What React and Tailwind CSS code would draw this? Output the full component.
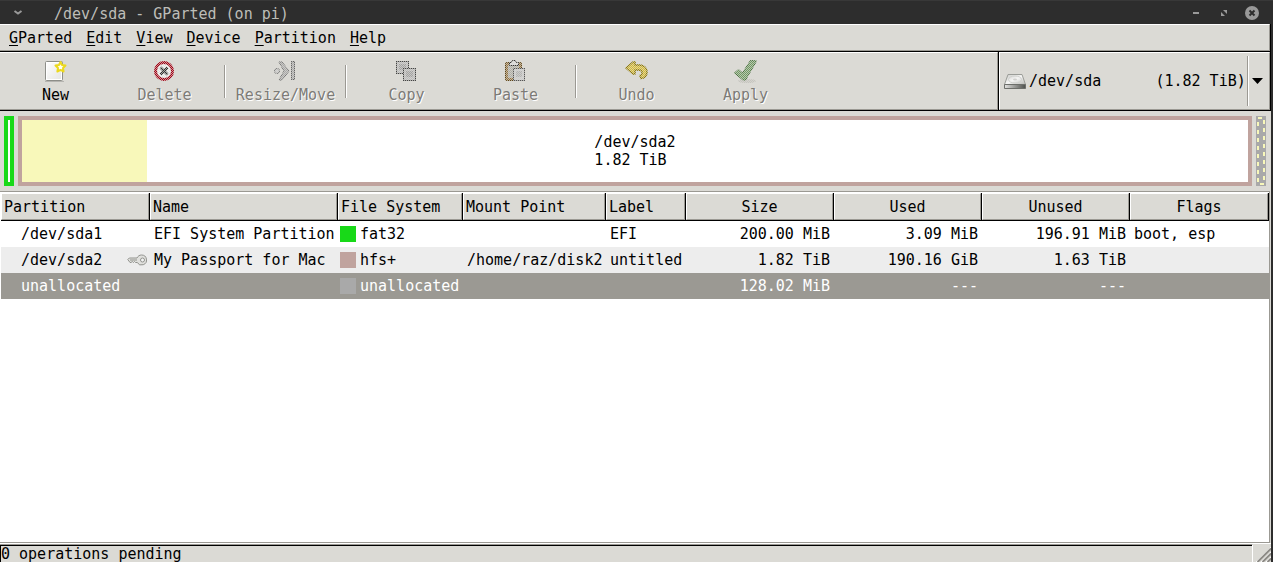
import React from "react";

function Dither({ id, children }) {
  return (
    <svg width="24" height="24" viewBox="1 1 24 24" aria-hidden="true">
      <defs>
        <pattern id={id + "-p"} width="2" height="2" patternUnits="userSpaceOnUse">
          <rect width="1" height="1" fill="#fff" />
          <rect x="1" y="1" width="1" height="1" fill="#fff" />
        </pattern>
        <mask id={id} maskUnits="userSpaceOnUse" x="0" y="0" width="26" height="26">
          <rect width="26" height="26" fill={"url(#" + id + "-p)"} shapeRendering="crispEdges" />
        </mask>
      </defs>
      <g opacity=".3">{children}</g>
      <g mask={"url(#" + id + ")"}>{children}</g>
    </svg>
  );
}

const NewIcon = () => (
  <svg width="24" height="24" viewBox="1 1 24 24" aria-hidden="true">
    <defs>
      <linearGradient id="paper" x1="0" y1="0" x2="1" y2="1">
        <stop offset="0" stopColor="#fff" />
        <stop offset="1" stopColor="#e4e4e2" />
      </linearGradient>
    </defs>
    <path d="M2 22.500H21" stroke="#b5b4b0" />
    <rect x="2.500" y="2.500" width="17" height="19" rx="1" fill="url(#paper)" stroke="#8d8e89" />
    <rect x="3.500" y="3.500" width="15" height="17" fill="none" stroke="#fff" />
    <path d="M17.500 3l1.500 3 3.500.5-2.500 2.500.6 3.500-3.100-1.600-3.100 1.600.6-3.500-2.500-2.500 3.500-.5z" fill="#fffef0" stroke="#ecd91e" strokeWidth="2" strokeLinejoin="round" />
  </svg>
);

const DeleteIcon = () => (
  <Dither id="delete">
    <circle cx="12" cy="12" r="8.500" fill="#f4f4f4" stroke="#a40014" strokeWidth="3" />
    <path d="M8.500 8.500l7 7M15.500 8.500l-7 7" stroke="#333" strokeWidth="2.500" />
  </Dither>
);

const ResizeIcon = () => (
  <Dither id="resize">
    <circle cx="4" cy="12" r="2.500" fill="#ccc" stroke="#777" />
    <path d="M6 3h3l7 9-7 9H6l5-9z" fill="#aaa" stroke="#777" />
    <rect x="18.500" y="2.500" width="3" height="18" fill="#aaa" stroke="#666" />
  </Dither>
);

const CopyIcon = () => (
  <Dither id="copy">
    <rect x="2.500" y="2.500" width="12" height="12" fill="#bbb" stroke="#444" />
    <path d="M5 6h7M5 8h7M5 10h7" stroke="#888" />
    <rect x="9.500" y="9.500" width="12" height="12" fill="#bbb" stroke="#444" />
    <path d="M12 13h7M12 15h7M12 17h7" stroke="#888" />
  </Dither>
);

const PasteIcon = () => (
  <Dither id="paste">
    <rect x="2.500" y="3.500" width="16" height="18" rx="1" fill="#93723f" stroke="#5f4516" />
    <rect x="5" y="6" width="11" height="13" fill="#b0aea6" />
    <path d="M6.500 6.500v-3h2l1-2h3l1 2h2v3z" fill="#ddd" stroke="#333" />
    <rect x="10.500" y="9.500" width="11" height="12" fill="#ccc" stroke="#555" />
    <path d="M13 13h6M13 15h6M13 17h6" stroke="#999" />
  </Dither>
);

const UndoIcon = () => (
  <Dither id="undo">
    <path d="M2 9l7-6h2v3h4c5 0 8 3 8 7s-3 6.500-6 6.500l-1-3c3-1 3-5-1-5.500h-4v4H9z" fill="#d9bd30" stroke="#8f7a08" strokeWidth="1.500" strokeLinejoin="round" />
  </Dither>
);

const ApplyIcon = () => (
  <Dither id="apply">
    <ellipse cx="14" cy="22" rx="9" ry="2" fill="#c6c5bf" />
    <path d="M1.500 14l4-3.500 4 3.500 8-12.500 6 .5-11 19H10z" fill="#6f9a62" stroke="#47703d" strokeLinejoin="round" />
  </Dither>
);

const DiskIcon = () => (
  <svg className="pointer-events-none absolute left-[3px] top-[17px]" width="24" height="24" viewBox="0 0 24 24" aria-hidden="true">
    <defs>
      <linearGradient id="disk" x1="0" y1="0" x2="1" y2="1">
        <stop offset="0" stopColor="#c9cac7" />
        <stop offset=".5" stopColor="#f5f5f4" />
        <stop offset="1" stopColor="#b9bab6" />
      </linearGradient>
      <linearGradient id="diskFront" x1="0" y1="0" x2="1" y2="0">
        <stop offset="0" stopColor="#e2e2e0" />
        <stop offset="1" stopColor="#4e504c" />
      </linearGradient>
    </defs>
    <path d="M5 4.500h14l3.500 10h-21z" fill="url(#disk)" stroke="#9b9d98" strokeLinejoin="round" />
    <ellipse cx="12" cy="9.500" rx="6.500" ry="3.500" fill="none" stroke="#cfd0cd" />
    <ellipse cx="12" cy="9.500" rx="2" ry="1" fill="#d0d0cd" />
    <path d="M1.500 14.500h21v4H1.500z" fill="url(#diskFront)" stroke="#6d6f6b" strokeLinejoin="round" />
  </svg>
);

const KeyIcon = () => (
  <svg width="20" height="14" viewBox="0 0 20 14" aria-hidden="true">
    <path d="M.8 6.500l1.500-1.500H10C11 3 12.500 2 14.500 2a5 5 0 1 1-4.300 7.500H8.500L7.500 8.500l-1 1-1.200-1-1.300 1H3z" fill="#e0e0dd" stroke="#92938e" />
    <circle cx="15.500" cy="7" r="2" fill="#f4f4f4" stroke="#92938e" />
    <path d="M3 7h7" stroke="#92938e" />
  </svg>
);

const Separator = () => (
  <div className="flex w-[12px] shrink-0 justify-center pb-[11px] pt-[12px]">
    <div className="w-[2px] border-l border-r border-l-[#9b9993] border-r-white" />
  </div>
);

function Tool({ label, icon, disabled }) {
  return (
    <button
      disabled={disabled}
      className={
        "flex w-[109px] shrink-0 flex-col items-center pt-[7px] " +
        (disabled ? "text-[#7d7b77] [text-shadow:1px_1px_0_#fff]" : "text-black")
      }
    >
      {icon}
      <span className="leading-[22px]">{label}</span>
    </button>
  );
}

const menus = ["GParted", "Edit", "View", "Device", "Partition", "Help"];

const columns = [
  ["Partition", "w-[149px] text-left"],
  ["Name", "w-[188px] text-left"],
  ["File System", "w-[125px] text-left"],
  ["Mount Point", "w-[143px] text-left"],
  ["Label", "w-[80px] text-left"],
  ["Size", "w-[148px] text-center"],
  ["Used", "w-[148px] text-center"],
  ["Unused", "w-[148px] text-center"],
  ["Flags", "text-center"],
];

const rows = [
  { part: "/dev/sda1", name: "EFI System Partition", fs: "fat32", swatch: "bg-[#18d918]", mount: "", label: "EFI", size: "200.00 MiB", used: "3.09 MiB", unused: "196.91 MiB", flags: "boot, esp", style: "bg-white text-black" },
  { part: "/dev/sda2", locked: true, name: "My Passport for Mac", fs: "hfs+", swatch: "bg-[#c0a39e]", mount: "/home/raz/disk2", label: "untitled", size: "1.82 TiB", used: "190.16 GiB", unused: "1.63 TiB", flags: "", style: "bg-[#ededed] text-black" },
  { part: "unallocated", name: "", fs: "unallocated", swatch: "bg-[#a9a9a9]", mount: "", label: "", size: "128.02 MiB", used: "---", unused: "---", flags: "", style: "bg-[#9b9993] text-white" },
];

const leftDashes = [6, 14, 22, 30, 38, 46, 54, 62];
const rightDashes = [4, 12, 20, 28, 36, 44, 52, 60];

export default function App() {
  return (
    <div className="flex h-screen flex-col overflow-hidden bg-[#2d2d2d] font-['DejaVu_Sans_Mono',monospace] text-[15px] leading-[18px] text-black">
      <header className="flex h-[24px] shrink-0 items-center border-t border-[#383838] pl-[13px] pr-[7px] pt-[1px] text-[#bdbdb8]">
        <button aria-label="Window menu" className="w-[41px]">
          <svg width="10" height="6" viewBox="0 0 10 6"><path d="M1.500 1l3.500 2.500L8.500 1" fill="none" stroke="#999" strokeWidth="2" /></svg>
        </button>
        <h1 className="flex-1 pt-[2px]">/dev/sda - GParted (on pi)</h1>
        <button aria-label="Minimize" className="flex w-[28px] justify-center">
          <svg width="8" height="14" viewBox="0 0 8 14"><path d="M1 7h6" stroke="#999" strokeWidth="2" /></svg>
        </button>
        <button aria-label="Restore" className="flex w-[28px] justify-center">
          <svg width="8" height="14" viewBox="0 0 8 14"><path d="M3 4h4v4zM1 6v4h4z" fill="#999" /></svg>
        </button>
        <button aria-label="Close" className="flex w-[28px] justify-center">
          <svg width="14" height="14" viewBox="0 0 14 14"><circle cx="7" cy="7" r="7" fill="#999" /><path d="M4.500 4.500l5 5M9.500 4.500l-5 5" stroke="#2d2d2d" strokeWidth="2" /></svg>
        </button>
      </header>

      <div className="mr-[2px] flex min-h-0 flex-1 flex-col bg-[#dbdad5]">
        <nav className="h-[28px] shrink-0 border-b border-r border-black">
          <div className="flex h-full items-center border-b border-r border-t border-b-[#9b9993] border-r-[#9b9993] border-t-white pl-[2px]">
            {menus.map((m) => (
              <button key={m} className="px-[7px]">
                <span className="underline decoration-1 underline-offset-2">{m[0]}</span>{m.slice(1)}
              </button>
            ))}
          </div>
        </nav>

        <div className="flex h-[59px] shrink-0">
          <div className="min-w-0 flex-1 border-b border-r border-black">
            <div className="flex h-full overflow-hidden border-b border-r border-t border-b-[#9b9993] border-r-[#9b9993] border-t-white pl-[1px]">
              <Tool label="New" icon={<NewIcon />} />
              <Tool label="Delete" icon={<DeleteIcon />} disabled />
              <Separator />
              <Tool label="Resize/Move" icon={<ResizeIcon />} disabled />
              <Separator />
              <Tool label="Copy" icon={<CopyIcon />} disabled />
              <Tool label="Paste" icon={<PasteIcon />} disabled />
              <Separator />
              <Tool label="Undo" icon={<UndoIcon />} disabled />
              <Tool label="Apply" icon={<ApplyIcon />} disabled />
            </div>
          </div>
          <div className="w-[272px] shrink-0 border-b border-r border-black">
            <div className="relative h-full border border-b-[#9b9993] border-l-white border-r-[#9b9993] border-t-white">
              <select aria-label="Device" className="h-full w-full appearance-none bg-transparent pl-[29px]">
                <option>{"/dev/sda\u00a0\u00a0\u00a0\u00a0\u00a0\u00a0(1.82 TiB)"}</option>
              </select>
              <DiskIcon />
              <div className="pointer-events-none absolute bottom-[3px] right-[20px] top-[3px] w-[2px] border-l border-r border-l-[#9b9993] border-r-white" />
              <svg className="pointer-events-none absolute right-[6px] top-[25px]" width="11" height="6" viewBox="0 0 11 6" aria-hidden="true"><path d="M0 0h11L5.500 6z" /></svg>
            </div>
          </div>
        </div>

        <section aria-label="Disk map" className="flex h-[80px] shrink-0 gap-[4px] px-[4px] py-[5px]">
          <div className="w-[10px] shrink-0 border-4 border-[#18d918] bg-white" />
          <div className="relative flex min-w-0 flex-1 items-center justify-center border-4 border-[#c0a39e] bg-white">
            <div className="absolute inset-y-0 left-0 w-[125px] bg-[#f8f8ba]" />
            <p className="relative">/dev/sda2<br />1.82 TiB</p>
          </div>
          <svg className="mr-[1px] shrink-0" width="10" height="70" viewBox="0 0 10 70" shapeRendering="crispEdges" aria-hidden="true">
            <rect width="10" height="70" fill="#a9a9a9" />
            <g fill="#f8f8ba">
              <rect x="2" y="1" width="4" height="2" />
              <rect x="4" y="67" width="4" height="2" />
              {leftDashes.map((y) => <rect key={y} x="1" y={y} width="2" height="4" />)}
              {rightDashes.map((y) => <rect key={y} x="7" y={y} width="2" height="4" />)}
            </g>
          </svg>
        </section>

        <main className="mr-[1px] min-h-0 flex-1 border-b border-r border-t border-[#9b9993] bg-white pl-[1px] pt-[1px]">
          <table className="w-full table-fixed border-collapse whitespace-pre">
            <thead>
              <tr>
                {columns.map(([name, cls]) => (
                  <th key={name} className={"h-[28px] p-0 font-normal " + cls}>
                    <div className="h-[28px] border-b border-r border-black">
                      <div className="h-full border border-b-[#9b9993] border-l-white border-r-[#9b9993] border-t-white bg-[#dbdad5] px-[2px] pt-[1px] leading-[25px]">{name}</div>
                    </div>
                  </th>
                ))}
              </tr>
            </thead>
            <tbody>
              {rows.map((r) => (
                <tr key={r.part} className={"h-[26px] " + r.style}>
                  <td className="p-0 pl-[20px] pr-[3px]">
                    <div className="flex items-center justify-between">{r.part}{r.locked && <KeyIcon />}</div>
                  </td>
                  <td className="p-0 pl-[4px]">{r.name}</td>
                  <td className="p-0 pl-[2px]">
                    <div className="flex items-center gap-[4px]"><span className={"size-[16px] shrink-0 " + r.swatch} />{r.fs}</div>
                  </td>
                  <td className="p-0 pl-[4px]">{r.mount}</td>
                  <td className="p-0 pl-[4px]">{r.label}</td>
                  <td className="p-0 pr-[4px] text-right">{r.size}</td>
                  <td className="p-0 pr-[4px] text-right">{r.used}</td>
                  <td className="p-0 pr-[4px] text-right">{r.unused}</td>
                  <td className="p-0 pl-[4px]">{r.flags}</td>
                </tr>
              ))}
            </tbody>
          </table>
        </main>

        <footer className="flex h-[19px] shrink-0 items-stretch overflow-hidden border-t border-white">
          <div className="flex-1 border-r border-t border-r-white border-t-[#9b9993]">
            <p className="h-full border-l border-t border-black leading-[16px]">0 operations pending</p>
          </div>
          <svg className="ml-[2px]" width="16" height="18" viewBox="0 0 16 18" aria-hidden="true">
            <path d="M1 18L16 3M6 18L16 8M11 18L16 13" stroke="#fff" strokeWidth="1" />
            <path d="M2.500 18L16 4.500M7.500 18L16 9.500M12.500 18L16 14.500" stroke="#8d8b86" strokeWidth="2" />
          </svg>
        </footer>
      </div>
    </div>
  );
}
